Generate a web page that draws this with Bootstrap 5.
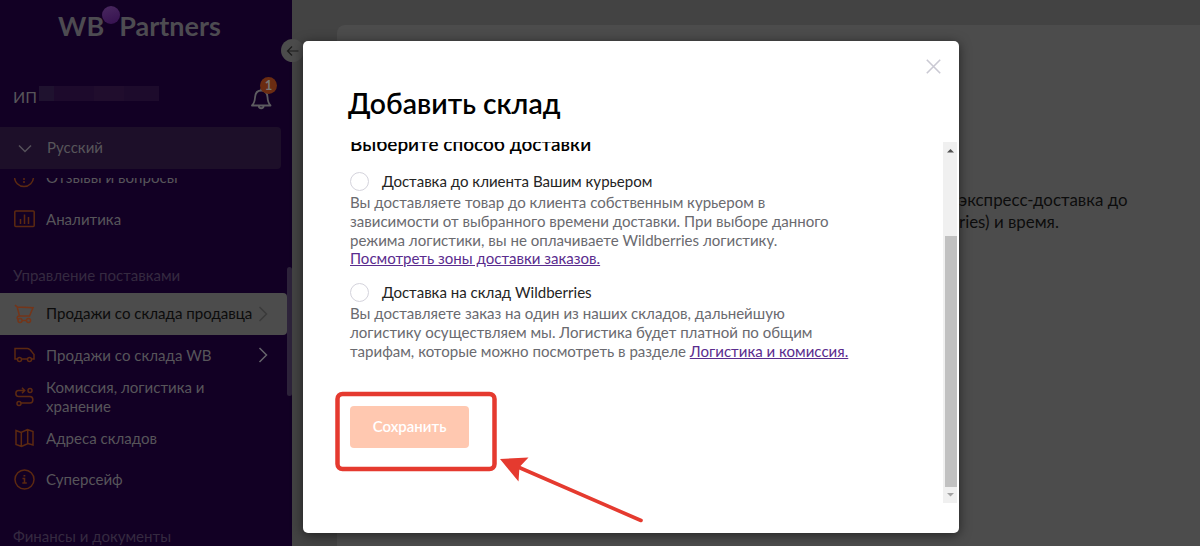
<!DOCTYPE html>
<html lang="ru">
<head>
  <meta charset="UTF-8">
  <meta name="viewport" content="width=device-width, initial-scale=1">
  <title>WB Partners</title>
  <link href="https://cdn.jsdelivr.net/npm/bootstrap@5.3.3/dist/css/bootstrap.min.css" rel="stylesheet">
  <style>
    body { font-family: Lato, "Open Sans", sans-serif; font-size: 15.07px; line-height: 19px; background: #434343; height: 546px; }
    svg { display: block; flex-shrink: 0; fill: none; }

    /* Боковое меню */
    .side { width: 292px; background: #120024; color: #57555a; }
    .brand { height: 52px; padding: 8px 0 0 58px; font-size: 27px; line-height: 36px; font-weight: 700; color: #4d4b51; }
    .brand-dot { width: 18px; height: 18px; margin: -2px -1px 0 -2px; background: linear-gradient(160deg, #4a2960, #35104f); }
    .account { height: 75px; padding: 27px 15px 0 13px; font-size: 16px; }
    .owner { margin-top: 8px; }
    .acc-mask { width: 120px; height: 15px; margin: 7px 0 0 2px; background: linear-gradient(90deg, #1f122f 0 15px, #1d0a2c 15px 55px, #200d2d 55px 85px, #1d0b2c 85px); }
    .bell { width: 28px; height: 34px; }
    .bell-count { width: 17px; height: 17px; top: -2px; right: 0; background: #6b2c12; color: #777; font-size: 13px; line-height: 17px; }
    .lang { height: 42px; width: 281px; padding-left: 17px; gap: 13px; background: #1d0f29; border-radius: 0 4px 4px 0; }
    .lang span { padding-bottom: 1px; }
    .menu-clip { margin-top: 9px; height: 368px; }
    .menu-list { margin-top: -21px; width: 287px; }
    .menu-item { height: 41.5px; padding: 0 19px 0 14px; gap: 11px; }
    .menu-item span { padding-bottom: .5px; }
    .menu-item.current { background: #4c4c4c; color: #0b0b0b; border-radius: 0 4px 4px 0; }
    .current .menu-arrow { margin-left: -6px; }
    .menu-label { height: 53px; padding: 26px 0 0 13px; color: #352a40; }
    .menu-label.last-label { height: 60px; }
    .menu-icon { stroke: #5c2911; stroke-width: 1.5; }
    .current .menu-icon { stroke: #743519; }
    .menu-thumb { width: 5px; height: 129px; margin-top: 89px; background: #2d233a; border-radius: 3px; }

    /* Страница под окном */
    .panel { margin: 25px 0 0 45px; background: #4c4c4c; border-radius: 8px 0 0 0; padding: 163.5px 0 0 622px; }
    .panel p { font-size: 16.9px; line-height: 22.5px; color: #0c0c0c; white-space: nowrap; }
    .collapse-btn { width: 23px; height: 23px; left: 281px; top: 39px; background: #4c4c4c; }

    /* Окно */
    .dialog { left: 303px; top: 41px; width: 656px; height: 492px; border-radius: 5px; box-shadow: 0 2px 12px rgba(0, 0, 0, .55); color: #242424; }
    .dialog-x { height: 48px; padding: 17.5px 18.5px 0 0; }
    .dialog h1 { height: 53px; padding-left: 45px; margin: 0; font-size: 28.4px; line-height: 28px; font-weight: 600; color: #000; }
    .dialog-scroll { height: 361px; }
    .dialog-content { width: 640px; padding-left: 47px; margin-top: -11px; }
    .dialog-content h2 { font-size: 19px; line-height: 26px; font-weight: 600; color: #000; margin: 0 0 14px; }
    .radio-ring { width: 19px; height: 19px; border: 1px solid #d4d3dc; }
    .option-row { height: 22px; padding-bottom: 1px; gap: 13px; }
    .hint { width: 510px; line-height: 18.8px; color: #6a6a6f; margin-bottom: 14px; }
    .hint a { color: #5a2c8e; }
    .save-btn { width: 119px; height: 42px; margin-top: 31px; padding: 0 0 1px; background: #ffc8b0; border-radius: 4px; font-size: 15px; font-weight: 600; }
    .bar { width: 14px; background: #f0f0f0; margin-right: 2px; }
    .bar-thumb { width: 12px; height: 251px; margin-top: 78px; background: #c1c1c1; }
    .note { left: 330px; top: 385px; }
  </style>
</head>
<body class="overflow-hidden">

  <div class="d-flex h-100">
    <aside class="side flex-shrink-0">
      <div class="brand d-flex"><span class="brand-wb">WB</span><span class="brand-dot rounded-circle"></span><span class="brand-p">Partners</span></div>
      <div class="account d-flex justify-content-between">
        <div class="d-flex"><span class="owner">ИП</span><span class="acc-mask"></span></div>
        <div class="bell position-relative">
          <svg width="28" height="34" viewBox="0 0 28 34" stroke="#5d5b60" stroke-width="1.8"><path d="M3 26.500h18.500c-2.200-2.200-2.700-3.500-3-8.500-.3-4.200-2.500-6.500-6.200-6.500s-5.900 2.300-6.200 6.500c-.3 5-.9 6.300-3.100 8.500zM9.800 27c0 3 4.800 3 4.800 0M12.200 9.500v2" stroke-linejoin="round"/></svg>
          <span class="bell-count position-absolute rounded-circle text-center fw-bold">1</span>
        </div>
      </div>
      <div class="lang d-flex align-items-center">
        <svg width="17" height="16" viewBox="0 0 17 16" stroke="#55515a" stroke-width="1.5"><path d="M2 5.500 8 11.500l6-6"/></svg>
        <span>Русский</span>
      </div>
      <div class="menu-clip d-flex overflow-hidden">
        <div class="menu-list flex-shrink-0">
          <div class="menu-item d-flex align-items-center">
            <svg class="menu-icon" width="21" height="21" viewBox="0 0 21 21"><circle cx="10" cy="10" r="9.500"/><path d="M10 5v5M10 11v2M10 14v2"/></svg>
            <span>Отзывы и вопросы</span>
          </div>
          <div class="menu-item d-flex align-items-center">
            <svg class="menu-icon" width="21" height="18" viewBox="0 0 21 18"><rect x=".8" y="1" width="19.400" height="15.500" rx="1"/><path d="M6.500 14V9M10.500 14V4.500M14.500 14V7"/></svg>
            <span>Аналитика</span>
          </div>
          <div class="menu-label">Управление поставками</div>
          <div class="menu-item current d-flex align-items-center">
            <svg class="menu-icon" width="21" height="20" viewBox="0 0 21 20"><path d="M1 1.200 3.200 3 5.500 12H15.500L19 3.800 3.200 3M5.500 12C2.500 12 2.500 15.500 5 15.500M8 16.500H12.500"/><circle cx="6" cy="16.500" r="2"/><circle cx="14.500" cy="16.500" r="2"/></svg>
            <span class="flex-grow-1 text-nowrap">Продажи со склада продавца</span>
            <svg class="menu-arrow" width="10" height="18" viewBox="0 0 10 18" stroke="#3a3a3a" stroke-width="1.400"><path d="M1.500 2l7 7-7 7"/></svg>
          </div>
          <div class="menu-item d-flex align-items-center">
            <svg class="menu-icon" width="21" height="16" viewBox="0 0 21 16"><path d="M3.500 12H1V1.500h12.500c3 0 4 3.500 6.500 6V12h-2M7.500 12h6"/><circle cx="5.500" cy="12.500" r="2"/><circle cx="15.500" cy="12.500" r="2"/></svg>
            <span class="flex-grow-1">Продажи со склада WB</span>
            <svg width="10" height="18" viewBox="0 0 10 18" stroke="#66636b" stroke-width="1.500"><path d="M1.500 2l7 7-7 7"/></svg>
          </div>
          <div class="menu-item d-flex align-items-center">
            <svg class="menu-icon" width="21" height="20" viewBox="0 0 21 20"><circle cx="16" cy="3.500" r="2"/><circle cx="5" cy="16.500" r="2"/><path d="M10.500 3.500H4.500c-3.500 0-3.500 6 0 6h11.500c3.800 0 3.800 6.500 0 6.500H7M8 .8l2.700 2.700L8 6.200"/></svg>
            <span>Комиссия, логистика и<br>хранение</span>
          </div>
          <div class="menu-item d-flex align-items-center">
            <svg class="menu-icon" width="21" height="20" viewBox="0 0 21 20"><path d="M2 2.500l5 2 6.500-3 5.500 2V17l-5-1.500-6.500 3L2 16.500zM7.300 4.500v14M13.700 1.500v14"/></svg>
            <span>Адреса складов</span>
          </div>
          <div class="menu-item d-flex align-items-center">
            <svg class="menu-icon" width="21" height="21" viewBox="0 0 21 21"><circle cx="10.500" cy="10.500" r="9.500"/><path d="M8.500 9.500h2v4.500M8.300 14h4.500M9.500 6.800h1.800"/></svg>
            <span>Суперсейф</span>
          </div>
          <div class="menu-label last-label">Финансы и документы</div>
        </div>
        <div class="menu-thumb"></div>
      </div>
    </aside>

    <main class="panel flex-grow-1 overflow-hidden">
      <p class="mb-0">экспресс-доставка до<br>ries) и время.</p>
    </main>
  </div>

  <button class="collapse-btn btn p-0 border-0 rounded-circle position-absolute d-flex align-items-center justify-content-center" type="button">
    <svg width="13" height="12" viewBox="0 0 13 12" stroke="#1c1c1c" stroke-width="1.200"><path d="M12.500 6H1.500M6 1.500 1.500 6 6 10.500"/></svg>
  </button>

  <div class="dialog bg-white position-absolute" role="dialog">
    <div class="dialog-x d-flex justify-content-end">
      <svg width="15" height="15" viewBox="0 0 15 15" stroke="#cac9d3" stroke-width="1.600"><path d="M.8.800l13.400 13.400M14.200.8.800 14.200"/></svg>
    </div>
    <h1>Добавить склад</h1>
    <div class="dialog-scroll d-flex overflow-hidden">
      <div class="dialog-content flex-shrink-0">
        <h2>Выберите способ доставки</h2>
        <div class="option-row d-flex align-items-center"><span class="radio-ring rounded-circle"></span>Доставка до клиента Вашим курьером</div>
        <div class="hint">Вы доставляете товар до клиента собственным курьером в<br>зависимости от выбранного времени доставки. При выборе данного<br>режима логистики, вы не оплачиваете Wildberries логистику.<br><a href="#">Посмотреть зоны доставки заказов.</a></div>
        <div class="option-row d-flex align-items-center"><span class="radio-ring rounded-circle"></span>Доставка на склад Wildberries</div>
        <div class="hint">Вы доставляете заказ на один из наших складов, дальнейшую<br>логистику осуществляем мы. Логистика будет платной по общим<br>тарифам, которые можно посмотреть в разделе <a href="#">Логистика и комиссия.</a></div>
        <button class="save-btn btn text-white border-0" type="button">Сохранить</button>
      </div>
      <div class="bar d-flex flex-column align-items-end">
        <svg width="14" height="16" viewBox="0 0 14 16"><path fill="#505050" d="M4 10.500l3.500-3.500 3.500 3.500z"/></svg>
        <div class="bar-thumb"></div>
        <svg width="14" height="16" viewBox="0 0 14 16"><path fill="#a3a3a3" d="M4 6l3.500 3.500L11 6z"/></svg>
      </div>
    </div>
  </div>

  <!-- Рамка и стрелка к кнопке -->
  <svg class="note position-absolute pe-none" width="330" height="150" viewBox="0 0 330 150">
    <rect x="7.500" y="9" width="157" height="75" rx="5" stroke="#e53a2f" stroke-width="4.500"/>
    <path d="M188 82l123 53.500" stroke="#e53a2f" stroke-width="3.600" stroke-linecap="round"/>
    <path d="M170 74l28.500-1.500-9 9.500-1 14.500z" fill="#e53a2f"/>
  </svg>

  <script src="https://cdn.jsdelivr.net/npm/bootstrap@5.3.3/dist/js/bootstrap.bundle.min.js"></script>
</body>
</html>
